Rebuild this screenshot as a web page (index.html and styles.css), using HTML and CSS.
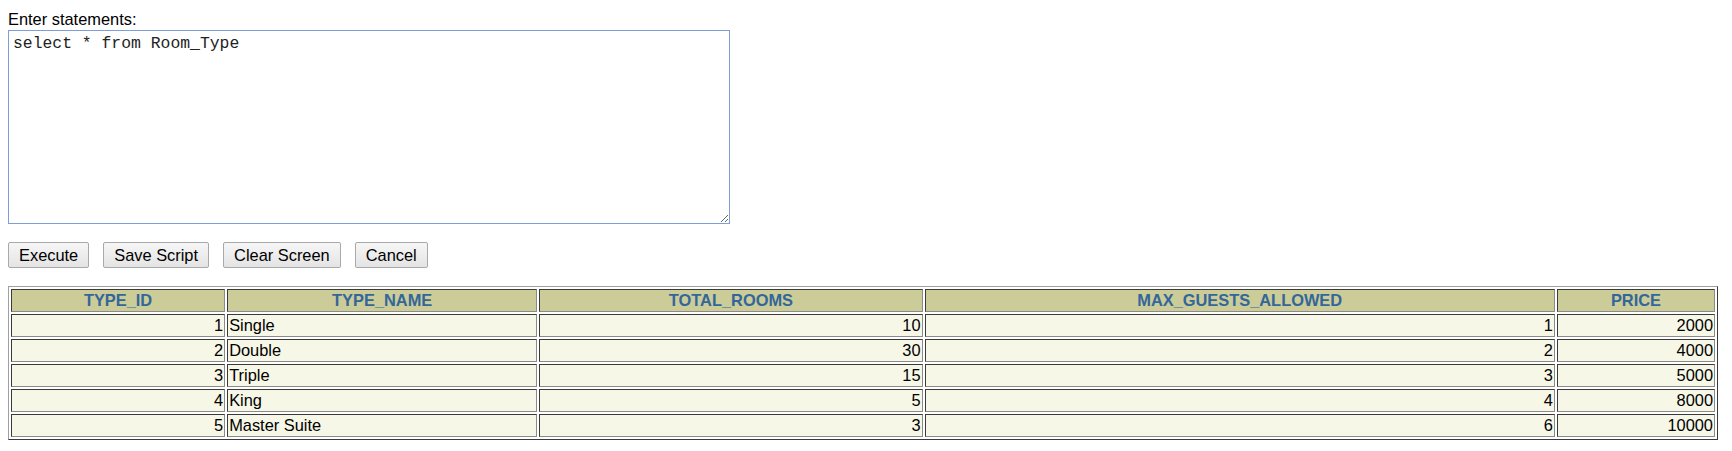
FILE: index.html
```
<!DOCTYPE html>
<html>
<head>
<meta charset="utf-8">
<link rel="stylesheet" href="styles.css">
</head>
<body>
<div class="page">
  <div class="label">Enter statements:</div>
  <textarea class="editor" spellcheck="false">select * from Room_Type</textarea>
  <div class="actions">
    <button class="btn">Execute</button>
    <button class="btn">Save Script</button>
    <button class="btn">Clear Screen</button>
    <button class="btn">Cancel</button>
  </div>
  <table class="result">
    <thead>
      <tr>
        <th class="c1">TYPE_ID</th>
        <th class="c2">TYPE_NAME</th>
        <th class="c3">TOTAL_ROOMS</th>
        <th class="c4">MAX_GUESTS_ALLOWED</th>
        <th class="c5">PRICE</th>
      </tr>
    </thead>
    <tbody>
      <tr><td class="num">1</td><td>Single</td><td class="num">10</td><td class="num">1</td><td class="num">2000</td></tr>
      <tr><td class="num">2</td><td>Double</td><td class="num">30</td><td class="num">2</td><td class="num">4000</td></tr>
      <tr><td class="num">3</td><td>Triple</td><td class="num">15</td><td class="num">3</td><td class="num">5000</td></tr>
      <tr><td class="num">4</td><td>King</td><td class="num">5</td><td class="num">4</td><td class="num">8000</td></tr>
      <tr><td class="num">5</td><td>Master Suite</td><td class="num">3</td><td class="num">6</td><td class="num">10000</td></tr>
    </tbody>
  </table>
</div>
</body>
</html>
```
FILE: styles.css
```
html, body {
  margin: 0;
  padding: 0;
  background: #ffffff;
}

.page {
  padding: 10px 8px 8px 8px;
  font-family: "Liberation Sans", Arial, sans-serif;
  font-size: 16.4px;
  color: #000;
}

.label {
  line-height: 19px;
  height: 19px;
}

.editor {
  display: block;
  box-sizing: border-box;
  margin: 1px 0 0 0;
  width: 722px;
  height: 194px;
  padding: 3px 4px;
  border: 1px solid #7f9dd6;
  border-radius: 0;
  outline: none;
  font-family: "Liberation Mono", "Courier New", monospace;
  font-size: 16.4px;
  line-height: 19px;
  color: #222;
  background: #fff;
  resize: both;
}

.actions {
  display: flex;
  gap: 14px;
  margin-top: 18px;
}

.btn {
  box-sizing: border-box;
  height: 26px;
  padding: 0 10px;
  margin: 0;
  border: 1px solid #a9a9a9;
  border-radius: 2px;
  background: linear-gradient(#f6f6f6, #e4e4e4);
  font-family: "Liberation Sans", Arial, sans-serif;
  font-size: 16.4px;
  color: #000;
  line-height: 22px;
}

.result {
  margin-top: 18px;
  width: 1710px;
  table-layout: fixed;
  border-collapse: separate;
  border-spacing: 2px;
  border: 1px solid;
  border-color: #a0a0a0 #3a3a3a #3a3a3a #a0a0a0;
  background: #fff;
}

.result th,
.result td {
  box-sizing: border-box;
  height: 23px;
  padding: 1px 1px;
  border: 1px solid;
  border-color: #3a3a3a #8a8a8a #8a8a8a #3a3a3a;
  line-height: 19px;
  font-size: 16.4px;
  white-space: nowrap;
  overflow: hidden;
}

.result th {
  background: #cccc99;
  color: #336699;
  font-weight: bold;
  text-align: center;
}

.result td {
  background: #f7f7e7;
  color: #000;
  text-align: left;
}

.result td.num {
  text-align: right;
}

.c1 { width: 214px; }
.c2 { width: 310px; }
.c3 { width: 383px; }
.c4 { width: 630px; }
.c5 { width: 158px; }
```
